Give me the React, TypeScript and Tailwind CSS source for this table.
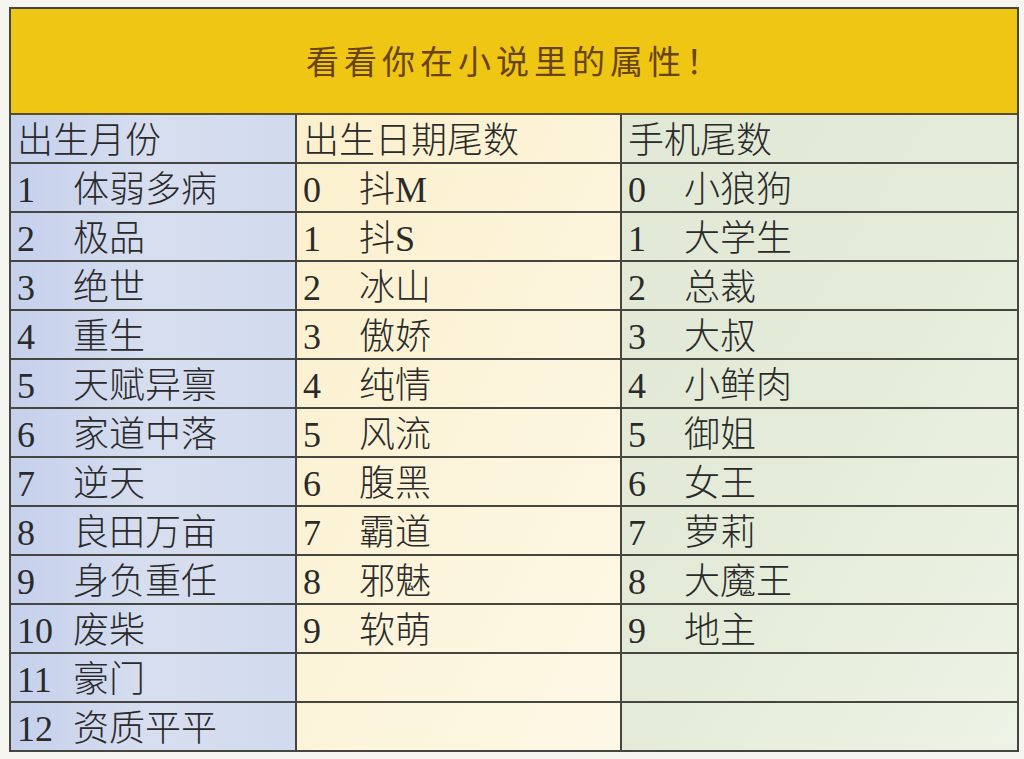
import React from "react";

const months: [string, string][] = [
  ["1", "体弱多病"],
  ["2", "极品"],
  ["3", "绝世"],
  ["4", "重生"],
  ["5", "天赋异禀"],
  ["6", "家道中落"],
  ["7", "逆天"],
  ["8", "良田万亩"],
  ["9", "身负重任"],
  ["10", "废柴"],
  ["11", "豪门"],
  ["12", "资质平平"],
];

const days: [string, string][] = [
  ["0", "抖M"],
  ["1", "抖S"],
  ["2", "冰山"],
  ["3", "傲娇"],
  ["4", "纯情"],
  ["5", "风流"],
  ["6", "腹黑"],
  ["7", "霸道"],
  ["8", "邪魅"],
  ["9", "软萌"],
];

const phones: [string, string][] = [
  ["0", "小狼狗"],
  ["1", "大学生"],
  ["2", "总裁"],
  ["3", "大叔"],
  ["4", "小鲜肉"],
  ["5", "御姐"],
  ["6", "女王"],
  ["7", "萝莉"],
  ["8", "大魔王"],
  ["9", "地主"],
];

const font = {
  fontFamily: '"Liberation Serif", "Noto Sans CJK SC", serif',
};

const Column = ({
  title,
  rows,
  className,
}: {
  title: string;
  rows: [string, string][];
  className: string;
}) => {
  // pad to 12 rows so every column lines up with the month list
  const filled = [...rows];
  while (filled.length < 12) filled.push(["", ""]);
  return (
    <div className={"flex flex-col " + className}>
      <div className="h-[49px] flex items-center pl-[6px] pt-[5px] border-b-2 border-[#45463f]">
        <span className="leading-none">{title}</span>
      </div>
      {filled.map(([n, label], i) => (
        <div
          key={i}
          className="h-[49px] flex items-center pl-[6px] pt-[5px] border-b-2 border-[#45463f]"
        >
          <span className="w-[56px] shrink-0 leading-none">{n}</span>
          <span className="leading-none">{label}</span>
        </div>
      ))}
    </div>
  );
};

export default function App() {
  return (
    <div
      className="w-[1024px] h-[759px] bg-[#f6f5ef] pl-[9px] pt-[7px] overflow-hidden text-[36px] text-[#2a2a2a] font-light"
      style={font}
    >
      <div className="w-[1010px] border-x-2 border-t-2 border-[#45463f]">
        <div className="h-[106px] flex items-center justify-center bg-[#efc614] border-b-2 border-[#5a4e2a]">
          <span className="text-[33px] tracking-[5px] text-[#684313] leading-none font-normal pl-[2px] pt-[5px]">
            看看你在小说里的属性！
          </span>
        </div>
        <div className="grid grid-cols-[286px_325px_395px]">
          <Column
            title="出生月份"
            rows={months}
            className="border-r-2 border-[#45463f] bg-linear-to-r from-[#c5d0ec] via-[#d7deef] to-[#d1daee]"
          />
          <Column
            title="出生日期尾数"
            rows={days}
            className="border-r-2 border-[#45463f] bg-linear-to-br from-[#fbf0cc] via-[#fcf4da] to-[#fdf8e6]"
          />
          <Column
            title="手机尾数"
            rows={phones}
            className="bg-linear-to-br from-[#e1e8d5] via-[#e4ecd9] to-[#edf3e6]"
          />
        </div>
      </div>
    </div>
  );
}
